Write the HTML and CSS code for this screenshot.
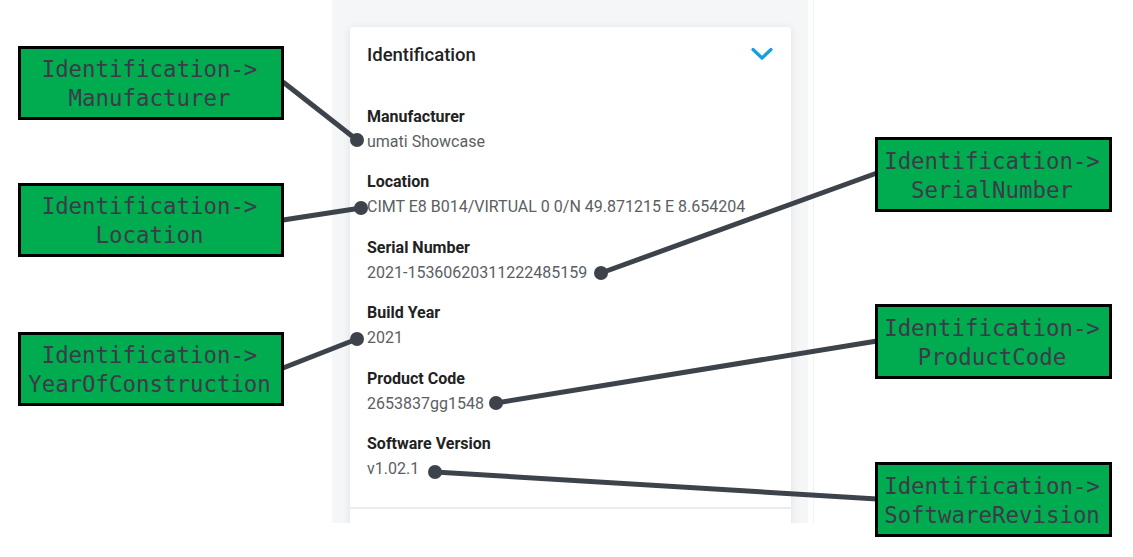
FILE: index.html
```html
<!DOCTYPE html>
<html lang="en">
<head>
<meta charset="utf-8">
<title>Identification</title>
<link rel="stylesheet" href="styles.css">
</head>
<body>
<div class="stage">
  <div class="panel">
    <section class="card">
      <header class="card-head">
        <h2 class="card-title">Identification</h2>
        <svg class="chevron" width="22" height="14" viewBox="0 0 22 14"><polyline points="2,2.5 11,11 20,2.5" fill="none" stroke="#139fe0" stroke-width="3.2" stroke-linecap="round" stroke-linejoin="round"/></svg>
      </header>
      <div class="fields">
        <div class="field"><div class="label">Manufacturer</div><div class="value">umati Showcase</div></div>
        <div class="field"><div class="label">Location</div><div class="value">CIMT E8 B014/VIRTUAL 0 0/N 49.871215 E 8.654204</div></div>
        <div class="field"><div class="label">Serial Number</div><div class="value">2021-15360620311222485159</div></div>
        <div class="field"><div class="label">Build Year</div><div class="value">2021</div></div>
        <div class="field"><div class="label">Product Code</div><div class="value">2653837gg1548</div></div>
        <div class="field"><div class="label">Software Version</div><div class="value">v1.02.1</div></div>
      </div>
      <div class="card-divider"></div>
    </section>
  </div>
  <div class="panel-edge"></div>

  <svg class="connectors" width="1133" height="557" viewBox="0 0 1133 557">
    <g stroke="#3d434b" stroke-width="5" fill="none">
      <line x1="283" y1="82" x2="357" y2="140"/>
      <line x1="283" y1="220" x2="361" y2="208"/>
      <line x1="283" y1="368" x2="357" y2="339"/>
      <line x1="601" y1="273" x2="877" y2="173"/>
      <line x1="496" y1="403" x2="877" y2="341"/>
      <line x1="435" y1="472" x2="877" y2="499"/>
    </g>
    <g fill="#3d434b">
      <circle cx="357" cy="140" r="7"/>
      <circle cx="361" cy="208" r="7"/>
      <circle cx="357" cy="339" r="7"/>
      <circle cx="601" cy="273" r="7"/>
      <circle cx="496" cy="403" r="7"/>
      <circle cx="435" cy="472" r="7"/>
    </g>
  </svg>

  <div class="tag tag-left tag-manufacturer">Identification-&gt;<br>Manufacturer</div>
  <div class="tag tag-left tag-location">Identification-&gt;<br>Location</div>
  <div class="tag tag-left tag-year">Identification-&gt;<br>YearOfConstruction</div>
  <div class="tag tag-right tag-serial">Identification-&gt;<br>SerialNumber</div>
  <div class="tag tag-right tag-product">Identification-&gt;<br>ProductCode</div>
  <div class="tag tag-right tag-software">Identification-&gt;<br>SoftwareRevision</div>
</div>
</body>
</html>
```
FILE: styles.css
```css
* { box-sizing: border-box; }
html, body { margin: 0; padding: 0; background: #ffffff; }
body { width: 1133px; height: 557px; overflow: hidden; font-family: Roboto, "Liberation Sans", sans-serif; }

.stage { position: relative; width: 1133px; height: 557px; display: flex; align-items: flex-start; padding-left: 332px; }

.panel { width: 476px; height: 523px; background: #f5f6f8; padding: 27px 17px 0 18px; overflow: hidden; }
.panel-edge { width: 1px; height: 523px; margin-left: 5px; background: #f1f2f4; }

.card { background: #ffffff; border-radius: 4px; box-shadow: 0 1px 8px rgba(0,0,0,0.09); height: 520px; }

.card-head { height: 56px; display: flex; align-items: center; justify-content: space-between; padding: 0 18px 0 17px; }
.card-title { margin: 0; font-size: 18.5px; font-weight: 500; color: #222; letter-spacing: 0; }
.chevron { display: block; margin-top: -2px; }

.fields { padding: 23px 17px 0 17px; display: flex; flex-direction: column; gap: 18.4px; }
.field { display: flex; flex-direction: column; }
.label { font-size: 16px; line-height: 22px; font-weight: 700; color: #222; }
.value { font-size: 16px; line-height: 22px; margin-top: 3px; color: #5b5e63; }

.card-divider { height: 2px; background: #ececec; margin-top: 27px; }

.connectors { position: absolute; left: 0; top: 0; pointer-events: none; }

.tag { position: absolute; background: #00ac4f; border: 3px solid #000; color: #3d3b4a; font-family: "DejaVu Sans Mono", "Liberation Mono", monospace; font-size: 22.4px; line-height: 29px; text-align: center; display: flex; flex-direction: column; justify-content: center; white-space: nowrap; padding: 2px 3px 0 0; }
.tag-left { left: 18px; width: 266px; height: 74px; }
.tag-right { left: 875px; width: 237px; height: 75px; }
.tag-manufacturer { top: 46px; }
.tag-location { top: 183px; }
.tag-year { top: 332px; }
.tag-serial { top: 137px; }
.tag-product { top: 304px; }
.tag-software { top: 462px; }
```
